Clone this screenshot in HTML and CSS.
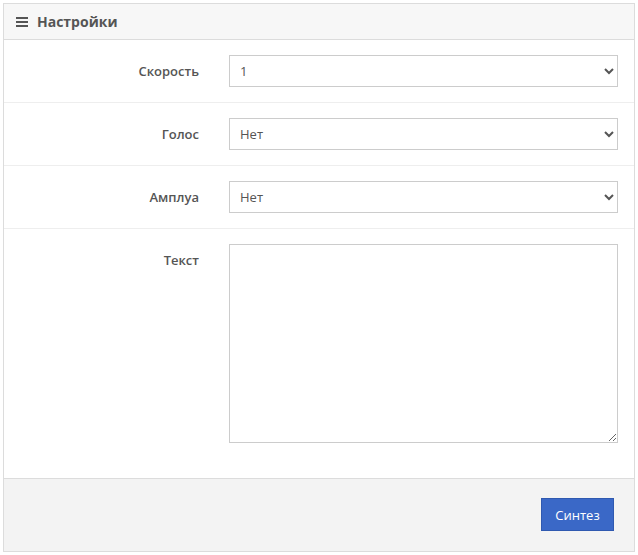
FILE: index.html
```html
<!DOCTYPE html>
<html lang="ru">
<head>
<meta charset="utf-8">
<title>Настройки</title>
<link rel="stylesheet" href="styles.css">
</head>
<body>
<div class="card">
  <div class="card-header">
    <svg class="icon" width="12" height="10" viewBox="0 0 12 10"><rect x="0" y="0" width="12" height="2" fill="#555"/><rect x="0" y="4" width="12" height="2" fill="#555"/><rect x="0" y="8" width="12" height="2" fill="#555"/></svg>
    <span class="title">Настройки</span>
  </div>
  <div class="card-body">
    <div class="row">
      <label class="label">Скорость</label>
      <select class="control"><option>1</option></select>
    </div>
    <div class="row">
      <label class="label">Голос</label>
      <select class="control"><option>Нет</option></select>
    </div>
    <div class="row">
      <label class="label">Амплуа</label>
      <select class="control"><option>Нет</option></select>
    </div>
    <div class="row row-last">
      <label class="label label-top">Текст</label>
      <textarea class="control textarea"></textarea>
    </div>
  </div>
  <div class="card-footer">
    <button class="btn">Синтез</button>
  </div>
</div>
</body>
</html>
```
FILE: styles.css
```css
* { box-sizing: border-box; }
html, body { margin: 0; padding: 0; background: #fff; }
body {
  padding: 3px 3px 4px 3px;
  font-family: "Open Sans", "Liberation Sans", sans-serif;
  font-size: 13px;
  color: #555;
}
.card {
  border: 1px solid #dcdcdc;
  background: #fff;
  height: 549px;
  display: flex;
  flex-direction: column;
}
.card-header {
  height: 36px;
  background: #f7f7f7;
  border-bottom: 1px solid #dcdcdc;
  display: flex;
  align-items: center;
  padding-left: 12px;
  padding-bottom: 1px;
  gap: 9px;
}
.icon { display: block; margin-top: 1px; }
.title {
  font-size: 14px;
  font-weight: 700;
  color: #555;
}
.card-body { flex: 1; }
.row {
  display: grid;
  grid-template-columns: 195px 389px;
  column-gap: 30px;
  padding: 15px 0;
  border-bottom: 1px solid #eee;
  align-items: center;
}
.row-last {
  border-bottom: none;
  align-items: start;
}
.label {
  text-align: right;
  font-weight: 600;
  color: #555;
}
.label-top { padding-top: 7px; }
.control {
  height: 32px;
  width: 100%;
  border: 1px solid #ccc;
  background: #fff;
  font-family: "Open Sans", "Liberation Sans", sans-serif;
  font-size: 13px;
  color: #555;
  padding: 0 6px;
  margin: 0;
  border-radius: 0;
}
.textarea {
  height: 199px;
  resize: vertical;
  display: block;
}
.card-footer {
  height: 73px;
  background: #f3f3f3;
  border-top: 1px solid #dcdcdc;
  display: flex;
  justify-content: flex-end;
  align-items: flex-start;
  padding: 19px 20px 0 0;
}
.btn {
  height: 33px;
  width: 73px;
  background: #3a68c7;
  border: 1px solid #2f59b0;
  color: #fff;
  font-family: "Open Sans", "Liberation Sans", sans-serif;
  font-size: 13px;
  padding: 0;
  cursor: pointer;
}
```
